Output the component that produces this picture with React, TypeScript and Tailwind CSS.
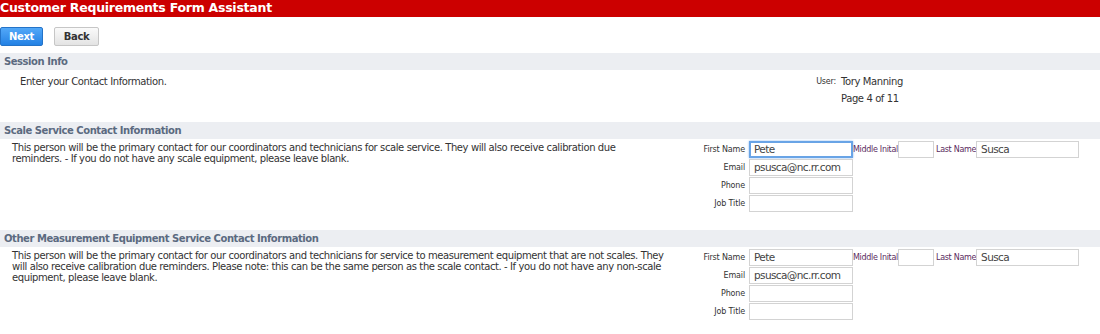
import React from "react"

const font = "font-['DejaVu_Sans',sans-serif]"

function Band({ title }: { title: string }) {
  return (
    <div className="h-[17px] bg-[#eceef2] pl-[4px] flex items-center">
      <span className="text-[10px] font-bold text-[#5b6a80] tracking-[-0.45px]">{title}</span>
    </div>
  )
}

function Field({ value, w, focus }: { value?: string; w: string; focus?: boolean }) {
  return (
    <div
      className={`${w} h-[17px] bg-white flex items-center px-[4px] text-[10.5px] leading-none text-[#444] tracking-[-0.6px] ${
        focus ? "border-2 border-[#69a4e6] shadow-[0_0_2px_#8ab8ee] pl-[3px]" : "border border-[#d3d3d3]"
      }`}
    >
      {value}
    </div>
  )
}

function Label({ text, purple }: { text: string; purple?: boolean }) {
  return (
    <span className={`whitespace-nowrap ${purple ? "text-[#5a2b5e]" : "text-[#333]"}`}>
      {text}
    </span>
  )
}

function ContactForm({ first, email, focus }: { first: string; email: string; focus?: boolean }) {
  return (
    <div className="grid grid-cols-[45px_108px_auto_37px_auto_103px] gap-y-[1px] items-center text-[8px] leading-[17px] tracking-[-0.15px]">
      <div className="text-right"><Label text="First Name" /></div>
      <div className="pl-[4px]"><Field value={first} w="w-[104px]" focus={focus} /></div>
      <div className="tracking-[-0.3px]"><Label text="Middle Inital" purple /></div>
      <Field w="w-[36px]" />
      <div className="tracking-[-0.3px] pl-[1px]"><Label text="Last Name" purple /></div>
      <Field value="Susca" w="w-[103px]" />

      <div className="text-right"><Label text="Email" /></div>
      <div className="pl-[4px]"><Field value={email} w="w-[104px]" /></div>
      <div className="col-span-4" />

      <div className="text-right"><Label text="Phone" /></div>
      <div className="pl-[4px]"><Field w="w-[104px]" /></div>
      <div className="col-span-4" />

      <div className="text-right"><Label text="Job Title" /></div>
      <div className="pl-[4px]"><Field w="w-[104px]" /></div>
      <div className="col-span-4" />
    </div>
  )
}

export default function App() {
  return (
    <div className={`w-[1100px] h-[334px] overflow-hidden bg-white text-[#333] ${font}`}>
      <div className="h-[17px] bg-[#cc0000] flex items-center">
        <span className="text-white font-bold text-[12.5px] tracking-[-0.25px] leading-none">
          Customer Requirements Form Assistant
        </span>
      </div>

      <div className="flex gap-[11px] pt-[10px] pb-[7px]">
        <button className="w-[43px] h-[19px] rounded-[2px] border border-[#2473c8] bg-gradient-to-b from-[#52a8f8] to-[#2281e4] text-white text-[10px] font-bold tracking-[-0.3px]">
          Next
        </button>
        <button className="w-[45px] h-[19px] rounded-[2px] border border-[#c6c6c6] bg-gradient-to-b from-[#fafafa] to-[#e3e3e3] text-[#333] text-[10px] font-bold tracking-[-0.3px]">
          Back
        </button>
      </div>

      <Band title="Session Info" />
      <div className="h-[52px] flex items-start pt-[6px] text-[10px] tracking-[-0.4px] leading-[11px]">
        <div className="w-[800px] pl-[20px]">Enter your Contact Information.</div>
        <div className="grid grid-cols-[36px_auto] content-start gap-x-[5px] gap-y-[6px] items-center leading-[11px]">
          <span className="text-right text-[8px] tracking-[-0.2px]">User:</span>
          <span>Tory Manning</span>
          <span />
          <span>Page 4 of 11</span>
        </div>
      </div>

      <Band title="Scale Service Contact Information" />
      <div className="h-[91px] flex items-start">
        <div className="w-[700px] pl-[12px] pr-[40px] pt-[3px] text-[10px] tracking-[-0.4px] leading-[11px]">
          This person will be the primary contact for our coordinators and technicians for scale service. They will
          also receive calibration due reminders. - If you do not have any scale equipment, please leave blank.
        </div>
        <div className="pt-[2px]">
          <ContactForm first="Pete" email="psusca@nc.rr.com" focus />
        </div>
      </div>

      <Band title="Other Measurement Equipment Service Contact Information" />
      <div className="flex items-start">
        <div className="w-[700px] pl-[12px] pr-[30px] pt-[3px] text-[10px] tracking-[-0.4px] leading-[11px]">
          This person will be the primary contact for our coordinators and technicians for service to measurement
          equipment that are not scales. They will also receive calibration due reminders. Please note: this can be
          the same person as the scale contact. - If you do not have any non-scale equipment, please leave blank.
        </div>
        <div className="pt-[2px]">
          <ContactForm first="Pete" email="psusca@nc.rr.com" />
        </div>
      </div>
    </div>
  )
}
